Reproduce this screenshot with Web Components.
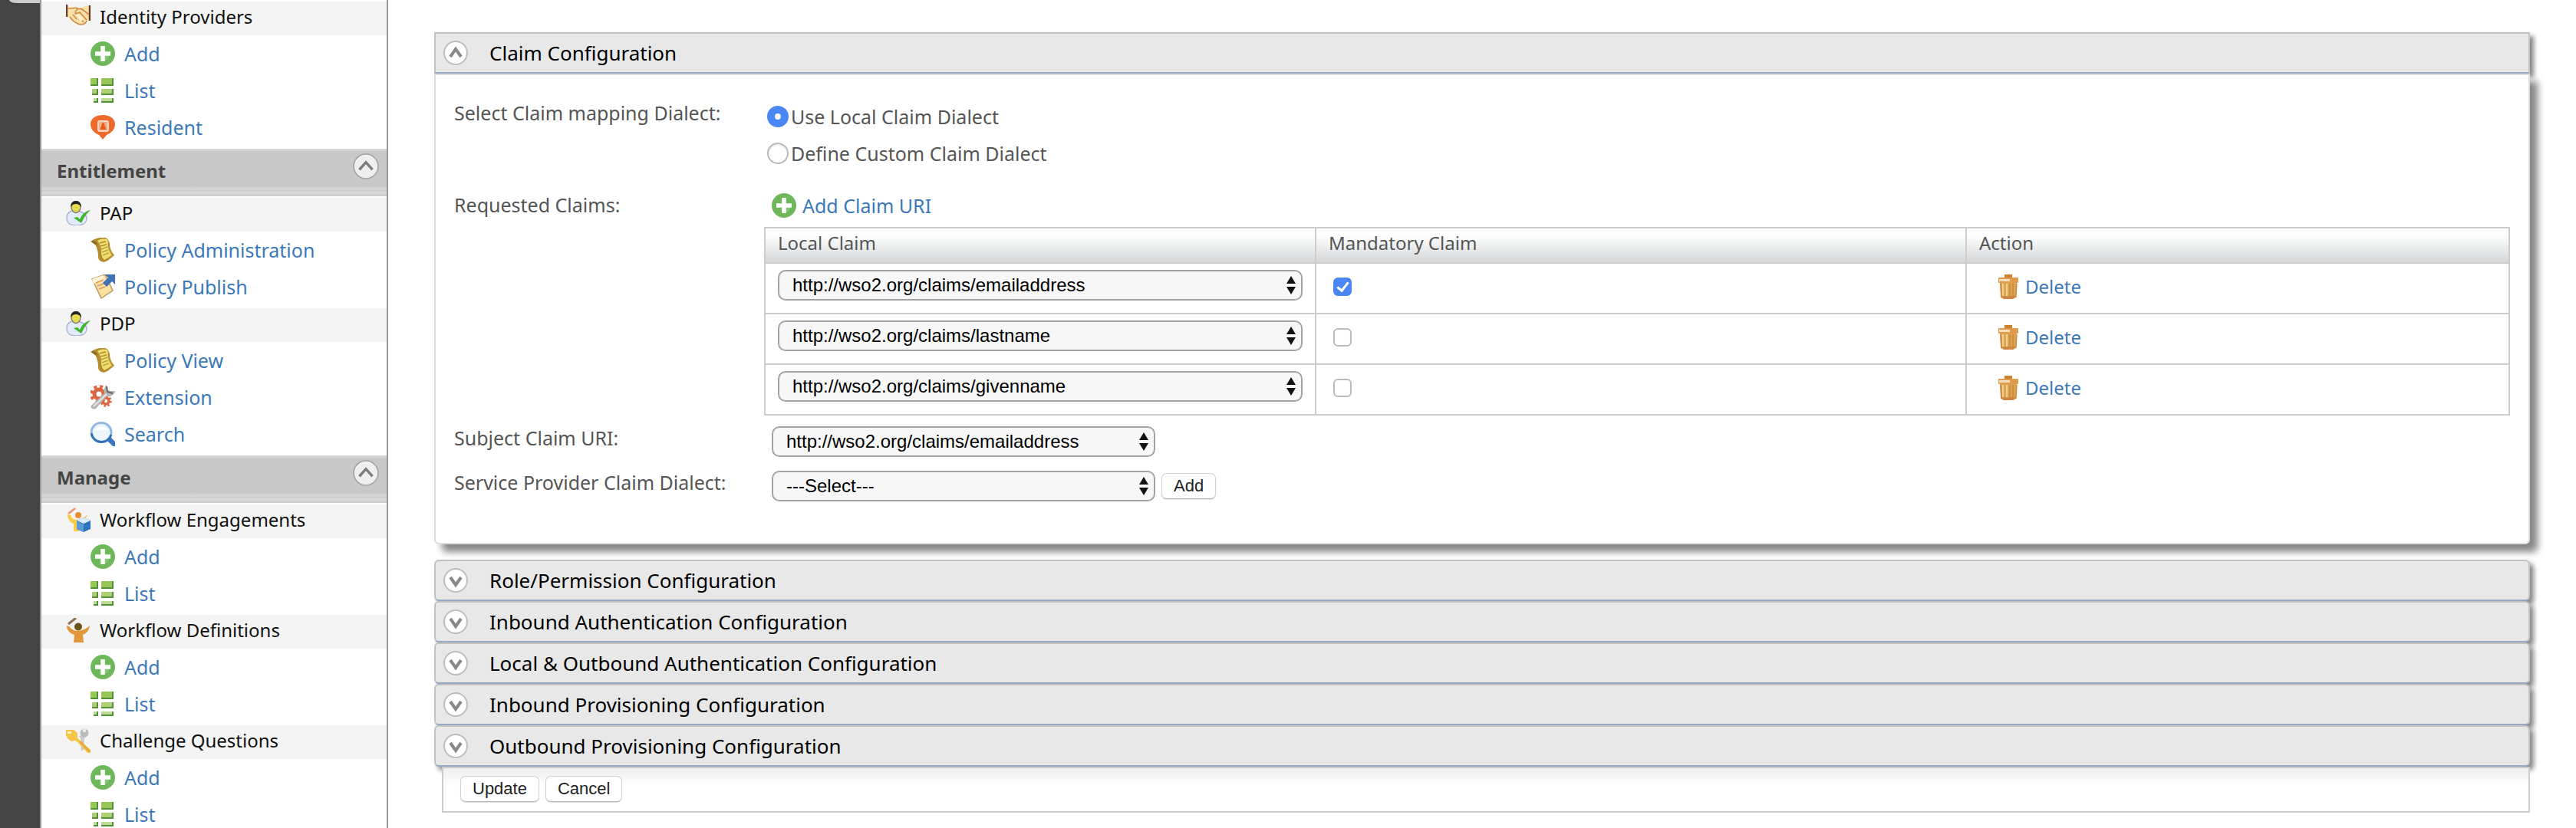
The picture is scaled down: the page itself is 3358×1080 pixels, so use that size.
<!DOCTYPE html>
<html lang="en">
<head>
<meta charset="utf-8">
<title>Identity Server Management Console</title>
<style>
  body { margin: 0; background: #fff; font: 25px/38px "Noto Sans", "Open Sans", sans-serif; color: #555; }
</style>
</head>
<body>
<admin-shell>
  <side-nav slot="nav">
    <nav-group>
      <nav-item kind="menu" icon="handshake">Identity Providers</nav-item>
      <nav-item icon="add">Add</nav-item>
      <nav-item icon="list">List</nav-item>
      <nav-item icon="resident">Resident</nav-item>
    </nav-group>
    <nav-group heading="Entitlement">
      <nav-item kind="menu" icon="user">PAP</nav-item>
      <nav-item icon="scroll">Policy Administration</nav-item>
      <nav-item icon="publish">Policy Publish</nav-item>
      <nav-item kind="menu" icon="user">PDP</nav-item>
      <nav-item icon="scroll">Policy View</nav-item>
      <nav-item icon="extension">Extension</nav-item>
      <nav-item icon="search">Search</nav-item>
    </nav-group>
    <nav-group heading="Manage">
      <nav-item kind="menu" icon="engage">Workflow Engagements</nav-item>
      <nav-item icon="add">Add</nav-item>
      <nav-item icon="list">List</nav-item>
      <nav-item kind="menu" icon="workflow">Workflow Definitions</nav-item>
      <nav-item icon="add">Add</nav-item>
      <nav-item icon="list">List</nav-item>
      <nav-item kind="menu" icon="keys">Challenge Questions</nav-item>
      <nav-item icon="add">Add</nav-item>
      <nav-item icon="list">List</nav-item>
    </nav-group>
  </side-nav>
  <config-section open heading="Claim Configuration"><claim-form></claim-form></config-section>
  <config-section heading="Role/Permission Configuration"></config-section>
  <config-section heading="Inbound Authentication Configuration"></config-section>
  <config-section heading="Local &amp; Outbound Authentication Configuration"></config-section>
  <config-section heading="Inbound Provisioning Configuration"></config-section>
  <config-section heading="Outbound Provisioning Configuration"></config-section>
  <action-bar></action-bar>
</admin-shell>

<script>
const BUTTON_CSS = `
  .btn { font: 22px/32px "Liberation Sans", Arial, sans-serif; color: #222; background: #fff; height: 34px;
    padding: 0 15px; border: 1px solid #d2d2d2; border-bottom-color: #b4b4b4; border-radius: 7px;
    box-shadow: 0 1px 1px rgba(0,0,0,.12); margin: 0; }`;

const ICONS = {
  handshake: `<path d="M1 1l5 3 7-1 4 2 6-2 7-2v19l-4 1c-1 4-5 5-9 5-5-1-10-5-13-9L1 15z" fill="#f9e0a6"/>
    <path d="M1 0v16M31 1v20" stroke="#6b3a20" stroke-width="2.4"/>
    <path d="M3 5c4 1 8-2 13 0M13 8c2-3 6-3 8-2l9 7M13 8c-2 4 2 4 5 2l9 10M5 16c3 5 9 9 14 10 4 0 7-2 8-5M9 13l5 6M12 11l6 9M20 20l3 3" stroke="#d08a45" stroke-width="1.6" fill="none"/>
    <path d="M12 13l5-1 6 7-4 3z" fill="#fff1cf"/>`,
  add: `<circle cx="16" cy="16" r="16" fill="#6eb75a"/><path d="M16 19l9-2-3 7-7 2z" fill="#8fca80" opacity=".7"/>
    <path d="M13.2 6h5.6v7.2H26v5.6h-7.2V26h-5.6v-7.2H6v-5.6h7.2z" fill="#fff"/>`,
  list: `<g fill="#568f3c"><path d="M0 0h10v10H0zM14 0h16v10H14zM2 14h8v8H2zM14 14h16v8H14zM4 26h6v6H4zM14 26h16v6H14z"/></g>
    <g fill="#98c653"><path d="M0 0h8v8H0zM14 0h14v8H14z"/></g>
    <g fill="#acd070"><path d="M2 14h6v6H2zM14 14h14v6H14z"/></g><g fill="#c0db98"><path d="M4 26h4v4H4zM14 26h14v4H14z"/></g>`,
  resident: `<path d="M16 32l-5-6C4 23 0 18 0 12 0 5 6 0 16 0s16 5 16 12c0 6-4 11-11 14z" fill="#ee6a2c"/>
    <rect x="10" y="8" width="13" height="13" rx="2" fill="#f5ad88" stroke="#fbd9c6" stroke-width="2"/>
    <path d="M16.500 9.500c3 3 1 4 3 6.500l1 3h-8l1-3c2-2.500 0-3.500 3-6.500z" fill="#e8581c"/>`,
  user: `<path d="M1 22c0-6 4-9 11-9 8 0 15 4 15 10 0 6-6 9-14 9S1 29 1 22z" fill="#e3ecf8" stroke="#a9b8d4" stroke-width="1.500"/>
    <ellipse cx="13" cy="8" rx="6" ry="7.500" fill="#e8da4e" stroke="#777" stroke-width="1.300"/>
    <path d="M6 8c0-5 3-8 7-8s7 3 7 8c-2-3-4-4-7-4s-5 1-7 4z" fill="#222"/>
    <path d="M10 22l5-1 3 3c3-6 7-11 14-12-5 4-8 9-12 17z" fill="#3fb52f"/>`,
  scroll: `<path d="M0 5C5 1 13-1 19 0c4 1 5 4 6 8 0 6 2 10 6 15l-5 4c-3 3-6 4-9 5-4-1-7-3-7-7 0-6-1-11-4-16z" fill="#b28d2e"/>
    <path d="M9 4c4-3 9-3 12-2 3 2 1 6 2 10 1 5 3 8 5 11l-10 6c-4-4-4-8-4-12 0-5-2-9-5-13z" fill="#f0dd6c"/>
    <path d="M1 5c3-2 6-1 8 4l-3 0z" fill="#8a6a2a"/>
    <path d="M12 7l8-2M13 11l8-2M14 15l8-3M15 19l8-3M16 23l8-3" stroke="#a8903a" stroke-width="1.300"/>`,
  publish: `<path d="M2 6l17-6 10 21-15 10z" fill="#fbe0a0" stroke="#b99a62" stroke-width="1.500"/>
    <path d="M2 6l14-5 3 7-15 4z" fill="#fff3d8"/>
    <path d="M7 11l10-4M9 15l11-4M11 19l8-3" stroke="#e09a62" stroke-width="1.600"/>
    <path d="M18 0h14v13l-4-4-7 7-5-5 7-7z" fill="#4072b8"/>`,
  extension: `<g stroke="#dd6540" fill="none"><circle cx="11" cy="12" r="6" stroke-width="5"/><circle cx="11" cy="12" r="10" stroke-width="4" stroke-dasharray="4 4"/>
    <circle cx="20" cy="21" r="4" stroke-width="3.500"/><circle cx="20" cy="21" r="6.500" stroke-width="2.500" stroke-dasharray="2.500 2.500"/></g>
    <path d="M1 27L18 11c-1-5 0-8 3-11v6l4 2h7c-1 5-6 8-11 7L7 31c-4 2-8-1-6-4z" fill="#b4b4b4"/>
    <path d="M4 28L21 12" stroke="#e6e6e6" stroke-width="2"/><path d="M21 2l1 7 7 2" stroke="#666" stroke-width="2" fill="none"/>`,
  search: `<path d="M21 21l4-2 7 7v6h-3l-7-7z" fill="#3a76bb"/><ellipse cx="14" cy="14" rx="13" ry="12.500" fill="#eef5fd" stroke="#8fb8e4" stroke-width="3"/>
    <path d="M1 15c1 7 7 11.500 13 11.500S25 23 27 17" stroke="#3571b5" stroke-width="3" fill="none"/><path d="M5 12c3-6 13-8 19 0-6-2-13-2-19 0z" fill="#fff"/>`,
  engage: `<path d="M2 9l4 1c1 4 4 5 7 6l7-1 9-6-8 11-4 2v9H10V21C5 19 2 15 2 9z" fill="#f7cd4b"/>
    <path d="M3 8l9-7" stroke="#ee9468" stroke-width="2.600"/><circle cx="16" cy="10" r="4" fill="#e58f2e"/>
    <path d="M14 17l9-4 9 4v11l-9 4-9-4z" fill="#2f74bd"/><path d="M14 17l9-4 9 4-9 4z" fill="#dcecf9"/><path d="M14 18l9 4v10l-9-4z" fill="#5a9bd8"/>`,
  workflow: `<path d="M1 10l3 1c3 4 7 6 12 6 6-1 11-3 15-7-1 6-4 10-9 12l1 10H10l1-10C5 20 1 16 1 10z" fill="#e2973a"/>
    <path d="M3 8L13 0" stroke="#8d7350" stroke-width="3"/><circle cx="16" cy="11.500" r="5" fill="#6e5513"/>`,
  keys: `<path d="M20 9l3-2 5 2-4 4-1 14-3 3-1-17-2-3z" fill="#c9c9c9"/><circle cx="24" cy="6" r="5.500" fill="#bcbcbc"/><circle cx="24" cy="3" r="2.200" fill="#eee"/>
    <path d="M0 2h10l5 4v6l5 6 12 10v4h-4L15 18l-3-2-5 1-5-4-2-4z" fill="#f4c647"/><path d="M2 4h5v3H2z" fill="#fff2c4"/><path d="M18 17l13 13" stroke="#e9a63b" stroke-width="3"/>`,
  trash: `<path d="M11 0h10v5H11z" fill="#cf7f2d"/><rect x="3" y="4" width="26" height="7" rx="1" fill="#e09a4b"/><path d="M4 6h14v3H4z" fill="#f9dfbd"/>
    <path d="M5 11h22l-1 19-4 2H10l-4-2z" fill="#dca650"/><path d="M9 12v17M14 12v18" stroke="#f0cf90" stroke-width="2"/>
    <path d="M6 12l1 17h19l1-17M18 12v17M22 12v17" stroke="#c98140" stroke-width="1.300" fill="none"/><path d="M7 29h18l-3 3H10z" fill="#d08343"/>`,
  up: `<circle cx="16" cy="16" r="15" fill="#fff" stroke="#bdbdbd" stroke-width="2"/><path d="M9 21l7-10 7 10" stroke="#888" stroke-width="4" fill="none"/>`,
  down: `<circle cx="16" cy="16" r="15" fill="#fff" stroke="#bdbdbd" stroke-width="2"/><path d="M9 12l7 10 7-10" stroke="#888" stroke-width="4" fill="none"/>`,
  collapse: `<circle cx="16" cy="16" r="15" fill="#efefef" stroke="#a2a2a6" stroke-width="1.500"/><path d="M8 20l8-9 8 9" stroke="#7c7c7c" stroke-width="3.200" fill="none"/>`
};

class Base extends HTMLElement {
  constructor() { super(); this.attachShadow({ mode: "open" }); }
  connectedCallback() { this.shadowRoot.innerHTML = this.render(); }
  render() { return ""; }
}

customElements.define("ui-icon", class extends Base {
  render() {
    return `<style>:host{display:block;flex:none;width:32px;height:32px}svg{display:block;width:100%;height:100%}</style>
      <svg viewBox="0 0 32 32" aria-hidden="true">${ICONS[this.getAttribute("name")]}</svg>`;
  }
});

customElements.define("admin-shell", class extends Base {
  render() {
    return `<style>
      :host { display: flex; height: 100vh; overflow: hidden; }
      .rail { flex: none; width: 52px; background: #444; }
      .tab { height: 4px; margin-left: 12px; background: #ccc; border-bottom-left-radius: 10px 4px; }
      main { flex: 1; min-width: 0; padding: 42px 60px 0; }
    </style>
    <div class="rail"><div class="tab"></div></div><slot name="nav"></slot><main><slot></slot></main>`;
  }
});

customElements.define("side-nav", class extends Base {
  render() {
    return `<style>:host{display:block;flex:none;width:450px;border:solid #999;border-width:0 2px;overflow:hidden}</style><nav><slot></slot></nav>`;
  }
});

customElements.define("nav-group", class extends Base {
  render() {
    const h = this.getAttribute("heading");
    return `<style>
      :host { display: block; padding-bottom: 2px; }
      header { display: flex; justify-content: space-between; align-items: flex-start; height: 56px; padding: 6px 10px 0 20px;
        background: linear-gradient(#dedede 0, #c8c8c8 4px, #c8c8c8 48px, #dadada 53px, #c9c9c9 55px, #dcdcdc 57px, #c9c9c9 62px); }
      h2 { margin: 0; font-size: 24px; line-height: 46px; font-weight: 700; color: #444; }
      button { border: 0; padding: 0; background: none; border-radius: 50%; }
      ui-icon { width: 34px; height: 34px; }
    </style>${h ? `<header><h2>${h}</h2><button aria-label="Collapse ${h}"><ui-icon name="collapse"></ui-icon></button></header>` : ""}<slot></slot>`;
  }
});

customElements.define("nav-item", class extends Base {
  render() {
    const menu = this.getAttribute("kind") === "menu";
    return `<style>
      :host { display: block; padding: 2px 0; }
      .row { display: flex; align-items: center; gap: 12px; height: 40px; padding: 0 0 4px 64px; line-height: 40px; white-space: nowrap; }
      .menu { padding-left: 32px; background: #f4f4f4; color: #111; font-size: 24px; }
      a { color: #3c78b8; text-decoration: none; }
    </style><div class="row ${menu ? "menu" : ""}"><ui-icon name="${this.getAttribute("icon")}"></ui-icon>${
      menu ? "<span><slot></slot></span>" : `<a href="#"><slot></slot></a>`}</div>`;
  }
});

customElements.define("config-section", class extends Base {
  render() {
    const open = this.hasAttribute("open");
    return `<style>
      :host { display: block; }
      :host([open]) { margin-bottom: 20px; }
      h2 { margin: 0; font-size: 26px; font-weight: 400; }
      button { box-sizing: border-box; display: flex; align-items: center; gap: 28px; width: 100%; height: 54px; padding: 0 10px;
        font: inherit; color: #000; text-align: left; background: #e8e8e8; border: 2px solid #c2c2c2; border-bottom-color: #9aa8c8;
        border-radius: 6px; box-shadow: 5px 5px 6px #888; }
      :host([open]) button { border-radius: 0; }
      .panel { position: relative; padding: 30px 24px 54px; background: #fff; border: 2px solid #ddd; border-radius: 0 0 6px 6px; box-shadow: 10px 10px 10px #888; }
    </style>
    <h2><button aria-expanded="${open}"><ui-icon name="${open ? "up" : "down"}"></ui-icon><span>${this.getAttribute("heading").replace("&", "&amp;")}</span></button></h2>
    ${open ? `<div class="panel"><slot></slot></div>` : ""}`;
  }
});

customElements.define("action-bar", class extends Base {
  render() {
    return `<style>${BUTTON_CSS}
      :host { position: relative; display: flex; gap: 8px; margin-left: 10px; padding: 10px 22px 12px; border: 2px solid #ccc;
        background: linear-gradient(#ededed, #fff 22px); }
    </style><button class="btn">Update</button><button class="btn">Cancel</button>`;
  }
});

customElements.define("claim-form", class extends Base {
  select(id, value, label) {
    return `<span class="select"><select id="${id}"${label ? ` aria-label="${label}"` : ""}><option>${value}</option></select>
      <svg viewBox="0 0 12 24" aria-hidden="true"><path d="M0 10L6 0l6 10zM0 14h12L6 24z" fill="#111"/></svg></span>`;
  }
  row(name, i) {
    return `<tr><td>${this.select("claim" + i, "http://wso2.org/claims/" + name, "Local claim " + (i + 1))}</td>
      <td><span class="cell check"><input type="checkbox" aria-label="Mandatory claim ${name}"${i ? "" : " checked"}></span></td>
      <td><span class="cell del"><a href="#"><ui-icon name="trash"></ui-icon>Delete</a></span></td></tr>`;
  }
  render() {
    return `<style>${BUTTON_CSS}
      :host { display: block; }
      form { display: grid; grid-template-columns: 404px 1fr; }
      form > label, .title { line-height: 38px; }
      .radios { padding: 0 4px 24px; }
      .radios label { display: flex; align-items: center; gap: 3px; height: 48px; }
      .radios input { appearance: none; box-sizing: border-box; width: 28px; height: 28px; margin: 0; border-radius: 50%;
        border: 2px solid #bbb; background: #fff; box-shadow: inset 0 2px 2px #eee; }
      .radios input:checked { border: 10px solid #4a86f4; box-shadow: none; }
      a { display: flex; align-items: center; gap: 8px; color: #3c78b8; text-decoration: none; }
      .claims { padding-bottom: 10px; }
      .claims > a { height: 40px; margin: 0 10px 8px; }
      table { width: 100%; table-layout: fixed; border-collapse: collapse; font-size: 24px; }
      .c1 { width: 718px; } .c2 { width: 848px; }
      th, td { box-sizing: border-box; border: 2px solid #ccc; padding: 0 16px; text-align: left; vertical-align: top; font-weight: 400; }
      th { height: 46px; line-height: 38px; background: linear-gradient(#fff 15%, #eff1f1 50%, #d9dadc 90%); }
      td { height: 66px; padding-top: 8px; }
      .cell { display: flex; align-items: center; height: 44px; }
      .check { padding-left: 6px; } .del { padding-left: 22px; }
      .del a { gap: 6px; }
      .check input { appearance: none; display: grid; place-items: center; box-sizing: border-box; width: 24px; height: 24px; margin: 0; border: 2px solid #bbb; border-radius: 6px; background: #fff; }
      .check input:checked { background: #4a86f4; border-color: #4a86f4; }
      .check input:checked::before { content: ""; width: 6px; height: 12px; margin-bottom: 4px; border: solid #fff; border-width: 0 3px 3px 0; rotate: 38deg; }
      .select { display: grid; align-items: center; height: 40px; }
      .select > * { grid-area: 1 / 1; }
      .select svg { justify-self: end; width: 12px; height: 24px; margin-right: 9px; pointer-events: none; }
      select { appearance: none; box-sizing: border-box; width: 100%; height: 40px; margin: 0; padding: 0 30px 0 17px; font: 24px/36px "Liberation Sans", Arial, sans-serif;
        color: #000; background: #f7f7f7; border: 2px solid #a3a3a3; border-radius: 10px; }
      .line { display: flex; align-items: center; gap: 8px; padding: 4px 10px 0; }
      .line .select { width: 500px; }
      .gap { padding-bottom: 14px; }
    </style>
    <form onsubmit="return false">
      <span class="title" id="dialect">Select Claim mapping Dialect:</span>
      <div class="radios" role="radiogroup" aria-labelledby="dialect">
        <label><input type="radio" name="dialect" checked>Use Local Claim Dialect</label>
        <label><input type="radio" name="dialect">Define Custom Claim Dialect</label>
      </div>
      <span class="title">Requested Claims:</span>
      <div class="claims">
        <a href="#"><ui-icon name="add"></ui-icon>Add Claim URI</a>
        <table><colgroup><col class="c1"><col class="c2"><col></colgroup>
          <thead><tr><th>Local Claim</th><th>Mandatory Claim</th><th>Action</th></tr></thead>
          <tbody>${["emailaddress", "lastname", "givenname"].map((n, i) => this.row(n, i)).join("")}</tbody>
        </table>
      </div>
      <label for="subject">Subject Claim URI:</label>
      <div class="line gap">${this.select("subject", "http://wso2.org/claims/emailaddress")}</div>
      <label for="spdialect">Service Provider Claim Dialect:</label>
      <div class="line">${this.select("spdialect", "---Select---")}<button class="btn">Add</button></div>
    </form>`;
  }
});
</script>
</body>
</html>
